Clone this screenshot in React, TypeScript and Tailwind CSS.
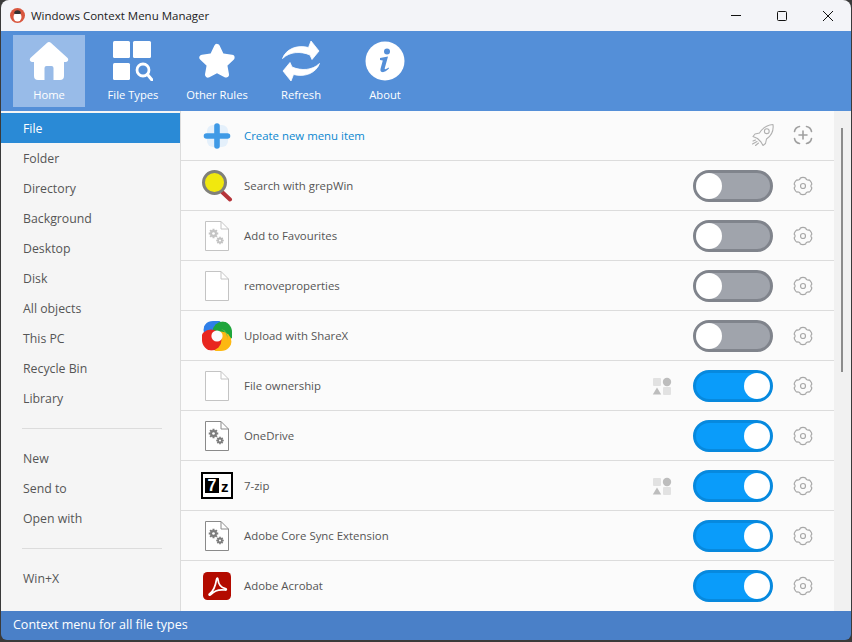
const FONT = "font-['Open_Sans','Noto_Sans',sans-serif]";

const sideTop = ['File', 'Folder', 'Directory', 'Background', 'Desktop', 'Disk', 'All objects', 'This PC', 'Recycle Bin', 'Library'];
const sideMid = ['New', 'Send to', 'Open with'];

function SideItem({ label, active }: { label: string; active?: boolean }) {
  return (
    <div className={`h-[30px] pl-[22px] pt-[2px] flex items-center text-[12.3px] ${active ? 'bg-[#2a8ad6] text-white' : 'text-[#555]'}`}>
      {label}
    </div>
  );
}

function SideRule() {
  return <div className="h-px bg-[#dcdcdc] ml-[21px] mr-[18px] my-[14.5px]" />;
}

function HomeIcon() {
  return (
    <svg width="40" height="40" viewBox="0 0 40 40" fill="white">
      <path d="M20 1 a2.5 2.5 0 0 1 1.8.7 L38.6 17 a2.4 2.4 0 0 1-1.6 4 H35 V35 a4 4 0 0 1-4 4 H24.5 V27 a2 2 0 0 0-2-2 H17.5 a2 2 0 0 0-2 2 V39 H9 a4 4 0 0 1-4-4 V21 H3 a2.4 2.4 0 0 1-1.6-4 L18.2 1.7 A2.5 2.5 0 0 1 20 1Z" />
    </svg>
  );
}

function FileTypesIcon() {
  return (
    <svg width="40" height="40" viewBox="0 0 40 40" fill="white">
      <rect x="0" y="0" width="17" height="17" rx="1.5" />
      <rect x="20" y="0" width="18" height="17" rx="1.5" />
      <rect x="0" y="22" width="17" height="17" rx="1.5" />
      <circle cx="30" cy="29" r="6" fill="none" stroke="white" strokeWidth="2.8" />
      <path d="M34.5 33.5 L39 39" stroke="white" strokeWidth="3" strokeLinecap="round" />
    </svg>
  );
}

function StarIcon() {
  return (
    <svg width="40" height="40" viewBox="0 0 40 40" fill="white" stroke="white" strokeWidth="6" strokeLinejoin="round">
      <path d="M20 6 L24.4 15.2 L34.6 16.6 L27.2 23.6 L29 33.6 L20 28.8 L11 33.6 L12.8 23.6 L5.4 16.6 L15.6 15.2Z" />
    </svg>
  );
}

function RefreshIcon() {
  const arrow = 'M1.5 17.5 C5 8 16 3.5 27.5 6.5 L30 0 L38 10 L31 18.5 L29 14 C19.5 10 9 10.5 1.5 17.5Z';
  return (
    <svg width="40" height="40" viewBox="0 0 40 40" fill="white" stroke="white" strokeWidth="0.8" strokeLinejoin="round">
      <path d={arrow} />
      <path d={arrow} transform="rotate(180 20 20)" />
    </svg>
  );
}

function AboutIcon() {
  return (
    <svg width="40" height="40" viewBox="0 0 40 40">
      <circle cx="20" cy="20" r="19.5" fill="white" />
      <circle cx="22" cy="10.5" r="3" fill="#548fd8" />
      <path d="M15 17 L23 15.5 L19.8 27 C19.4 28.6 20.6 28.8 23.6 26.6 L24 27.6 C21 30.6 18.6 31.6 16.8 31 C15.4 30.5 15.2 29 15.6 27.4 L17.8 19.4 L15 19Z" fill="#548fd8" />
    </svg>
  );
}

function ToolButton({ label, active, children }: { label: string; active?: boolean; children: React.ReactNode }) {
  return (
    <div className={`w-[72px] h-[72px] flex flex-col items-center pt-[6px] ${active ? 'bg-[#98bbe8]' : ''}`}>
      <div className="h-[40px]">{children}</div>
      <div className="mt-[5px] text-[11.2px] leading-[18px] text-white whitespace-nowrap">{label}</div>
    </div>
  );
}

function Gear() {
  return (
    <svg width="20" height="20" viewBox="0 0 20 20" fill="none" stroke="#a8a8a8" strokeWidth="1.2" strokeLinejoin="round">
      <path d="M7.4 2 C8.4 1.2 11.6 1.2 12.6 2 C13 3.4 14.6 4.4 16 3.9 C17.2 4.2 18.9 7.2 18.8 8.3 C17.6 9.2 17.6 10.8 18.8 11.7 C18.9 12.8 17.2 15.8 16 16.1 C14.6 15.6 13 16.6 12.6 18 C11.6 18.8 8.4 18.8 7.4 18 C7 16.6 5.4 15.6 4 16.1 C2.8 15.8 1.1 12.8 1.2 11.7 C2.4 10.8 2.4 9.2 1.2 8.3 C1.1 7.2 2.8 4.2 4 3.9 C5.4 4.4 7 3.4 7.4 2Z" />
      <circle cx="10" cy="10" r="2.5" />
    </svg>
  );
}

function ScanPlus() {
  return (
    <svg width="20" height="20" viewBox="0 0 20 20" fill="none" stroke="#a0a0a0" strokeWidth="1.6" strokeLinecap="round">
      <path d="M1.5 6.5 C2 3.8 3.8 2 6.5 1.5 M13.5 1.5 C16.2 2 18 3.8 18.5 6.5 M18.5 13.5 C18 16.2 16.2 18 13.5 18.5 M6.5 18.5 C3.8 18 2 16.2 1.5 13.5" />
      <path d="M10 6 V14 M6 10 H14" />
    </svg>
  );
}

function RocketIcon() {
  return (
    <svg width="24" height="24" viewBox="0 0 24 24" fill="none" stroke="#b0b0b0" strokeWidth="1.1" strokeLinejoin="round" strokeLinecap="round">
      <path d="M22 1.5 C16 2 11.5 5 8.5 10 L4 11 L2 13.5 L6.5 15.5 L10 19 L12 22.5 L14.5 20.5 L15.5 16 C20.5 12.5 22.8 7.5 22 1.5Z" />
      <circle cx="15.8" cy="8.2" r="2.4" />
      <path d="M2 18 L4.5 17 M1.5 21 L6 18.5 M4.5 22.5 L7.5 20" />
    </svg>
  );
}

function Shapes() {
  return (
    <svg width="20" height="20" viewBox="0 0 20 20">
      <rect x="1" y="2" width="8" height="8" rx="1" fill="#e2e2e2" />
      <circle cx="15" cy="6" r="4.2" fill="#bdbdbd" />
      <path d="M5 11.5 L9.2 18.5 H0.8Z" fill="#bdbdbd" />
      <rect x="11" y="11" width="8" height="8" rx="1" fill="#e2e2e2" />
    </svg>
  );
}

function Toggle({ on }: { on: boolean }) {
  return (
    <div
      className={`w-[80px] h-[32px] rounded-full border-[3px] flex items-center ${
        on ? 'bg-[#0a9cfa] border-[#0789de] justify-end' : 'bg-[#a0a4ac] border-[#80848c] justify-start'
      }`}
    >
      <div className="w-[26px] h-[26px] rounded-full bg-white" />
    </div>
  );
}

function Cog({ x, y, r, color }: { x: number; y: number; r: number; color: string }) {
  const teeth = [0, 45, 90, 135];
  return (
    <g fill={color}>
      <circle cx={x} cy={y} r={r} />
      {teeth.map((a) => (
        <rect key={a} x={x - r * 0.3} y={y - r * 1.4} width={r * 0.6} height={r * 2.8} transform={`rotate(${a} ${x} ${y})`} />
      ))}
      <circle cx={x} cy={y} r={r * 0.4} fill="#fff" />
    </g>
  );
}

function DocIcon({ gears, dark }: { gears?: boolean; dark?: boolean }) {
  const line = dark ? '#8a8a8a' : '#c4c4c4';
  const cog = dark ? '#7d7d7d' : '#c4c4c4';
  return (
    <svg width="24" height="30" viewBox="0 0 24 30" fill="none">
      <path d="M0.5 0.5 H16 L23.5 8 V29.5 H0.5Z" fill="#fff" stroke={line} />
      <path d="M16 0.5 V8 H23.5" stroke={line} />
      {gears && (
        <>
          <Cog x={8.5} y={12.5} r={3.4} color={cog} />
          <Cog x={15} y={19.5} r={2.7} color={cog} />
        </>
      )}
    </svg>
  );
}

function PlusIcon() {
  return (
    <svg width="30" height="30" viewBox="0 0 30 30">
      <rect x="5" y="4" width="21" height="22" rx="6" fill="#e4f0fb" />
      <path d="M15 5 V25 M4.5 15 H25.5" stroke="#3f9ae6" strokeWidth="5.6" strokeLinecap="round" />
    </svg>
  );
}

function GrepIcon() {
  return (
    <svg width="32" height="32" viewBox="0 0 32 32">
      <path d="M20 21 L29 29.5" stroke="#b5343a" strokeWidth="4" strokeLinecap="round" />
      <circle cx="13.5" cy="12.5" r="11" fill="#f1e80e" stroke="#80807a" strokeWidth="3" />
    </svg>
  );
}

function ShareXIcon() {
  return (
    <svg width="32" height="32" viewBox="0 0 32 32">
      <clipPath id="sharex-clip">
        <rect x="1" y="1" width="30" height="30" rx="11" />
      </clipPath>
      <g clipPath="url(#sharex-clip)">
        <circle cx="13" cy="10" r="10.5" fill="#2f7fe8" />
        <circle cx="22" cy="12" r="10.5" fill="#1fa53c" />
        <circle cx="20" cy="22" r="10.5" fill="#fdb812" />
        <circle cx="10" cy="20" r="10.5" fill="#e8261f" />
        <path d="M20 9 A8 8 0 0 1 26 20 A10 10 0 0 0 20 9Z" fill="#7cc142" />
      </g>
      <circle cx="16" cy="16" r="5.6" fill="#fbfbfb" />
    </svg>
  );
}

function SevenZip() {
  return (
    <div className="w-[32px] h-[27px] border-[2px] border-black bg-white flex items-center pl-[2px] font-['Liberation_Sans',sans-serif] font-bold leading-none">
      <span className="w-[14px] h-[15px] bg-black text-white text-[16px] flex items-center justify-center">7</span>
      <span className="ml-[2px] mt-[2px] text-black text-[15px]">z</span>
    </div>
  );
}

function AcrobatIcon() {
  return (
    <svg width="28" height="28" viewBox="0 0 28 28">
      <rect width="28" height="28" rx="4.5" fill="#b30b00" />
      <path d="M6.5 22 C9.5 20 12.4 14 13.4 8 C13.8 5.6 14.8 5.4 15 7.6 C15.4 12 18.4 15.6 22.4 16.6 C24 17 23.4 18.2 21.8 18 C17 17.4 11.4 18.6 8 22.4 C6.6 23.8 5.4 22.8 6.5 22Z" fill="none" stroke="#fff" strokeWidth="1.7" strokeLinejoin="round" />
    </svg>
  );
}

type RowData = { label: string; icon: React.ReactNode; on: boolean; shapes?: boolean };

const rows: RowData[] = [
  { label: 'Search with grepWin', icon: <GrepIcon />, on: false },
  { label: 'Add to Favourites', icon: <DocIcon gears />, on: false },
  { label: 'removeproperties', icon: <DocIcon />, on: false },
  { label: 'Upload with ShareX', icon: <ShareXIcon />, on: false },
  { label: 'File ownership', icon: <DocIcon />, on: true, shapes: true },
  { label: 'OneDrive', icon: <DocIcon gears dark />, on: true },
  { label: '7-zip', icon: <SevenZip />, on: true, shapes: true },
  { label: 'Adobe Core Sync Extension', icon: <DocIcon gears dark />, on: true },
  { label: 'Adobe Acrobat', icon: <AcrobatIcon />, on: true },
];

export default function App() {
  return (
    <div className={`w-[852px] h-[642px] bg-[#3a3a3a] pl-px pr-px pb-[2px] ${FONT}`}>
      <div className="h-full flex flex-col rounded-t-[8px] rounded-b-[6px] overflow-hidden">
        {/* title bar */}
        <div className="h-[31px] shrink-0 bg-[#f3f4f8] flex items-center pl-[9px]">
          <svg width="15" height="15" viewBox="0 0 15 15">
            <circle cx="7.5" cy="7.5" r="7.5" fill="#d9573f" />
            <ellipse cx="7.5" cy="9" rx="4" ry="4.5" fill="#fff" />
            <path d="M4 5.5 C4 1 11 1 11 5.5 L9.5 6 H5.5Z" fill="#333" />
          </svg>
          <span className="ml-[6px] text-[11.5px] text-[#222]">Windows Context Menu Manager</span>
          <div className="ml-auto flex text-[#111]">
            <div className="w-[46px] flex justify-center"><svg width="12" height="12" viewBox="0 0 12 12" fill="none" stroke="currentColor" strokeWidth="1"><path d="M1 5.5 H11" /></svg></div>
            <div className="w-[46px] flex justify-center"><svg width="12" height="12" viewBox="0 0 12 12" fill="none" stroke="currentColor" strokeWidth="1"><rect x="1.5" y="1.5" width="9" height="9" rx="1" /></svg></div>
            <div className="w-[46px] flex justify-center"><svg width="12" height="12" viewBox="0 0 12 12" fill="none" stroke="currentColor" strokeWidth="1"><path d="M1 1 L11 11 M11 1 L1 11" /></svg></div>
          </div>
        </div>

        {/* toolbar */}
        <div className="h-[80px] shrink-0 bg-[#548fd8] flex gap-[12px] pl-[12px] pt-[4px]">
          <ToolButton label="Home" active><HomeIcon /></ToolButton>
          <ToolButton label="File Types"><FileTypesIcon /></ToolButton>
          <ToolButton label="Other Rules"><StarIcon /></ToolButton>
          <ToolButton label="Refresh"><RefreshIcon /></ToolButton>
          <ToolButton label="About"><AboutIcon /></ToolButton>
        </div>

        <div className="flex-1 flex min-h-0">
          {/* side list */}
          <div className="w-[180px] shrink-0 bg-[#f5f5f5] border-r border-[#dcdcdc] pt-[2px]">
            {sideTop.map((s, i) => <SideItem key={s} label={s} active={i === 0} />)}
            <SideRule />
            {sideMid.map((s) => <SideItem key={s} label={s} />)}
            <SideRule />
            <SideItem label="Win+X" />
          </div>

          {/* item list */}
          <div className="flex-1 flex min-w-0 bg-[#fbfbfb]">
            <div className="w-[653px] shrink-0">
              <div className="h-[50px] border-b border-[#dcdcdc] flex items-center pr-[21px]">
                <div className="w-[63px] flex justify-center pl-[9px]"><PlusIcon /></div>
                <span className="text-[11.4px] text-[#0b87d0]">Create new menu item</span>
                <div className="ml-auto mb-[2px]"><RocketIcon /></div>
                <div className="ml-[18px] mb-[1px]"><ScanPlus /></div>
              </div>
              {rows.map((r) => (
                <div key={r.label} className="h-[50px] border-b border-[#dcdcdc] last:border-b-0 flex items-center pr-[21px]">
                  <div className="w-[63px] flex justify-center pl-[9px]">{r.icon}</div>
                  <span className="text-[11.4px] text-[#555]">{r.label}</span>
                  {r.shapes && <div className="ml-auto mr-[21px]"><Shapes /></div>}
                  <div className={r.shapes ? '' : 'ml-auto'}><Toggle on={r.on} /></div>
                  <div className="ml-[20px]"><Gear /></div>
                </div>
              ))}
            </div>
            <div className="flex-1 bg-[#f1f1f1] pt-[17px] pl-[7px]">
              <div className="w-[2px] h-[244px] bg-[#8c8c8c]" />
            </div>
          </div>
        </div>

        {/* status bar */}
        <div className="h-[29px] shrink-0 bg-[#4a80c8] pl-[12px] flex items-center text-[12.5px] text-white">
          Context menu for all file types
        </div>
      </div>
    </div>
  );
}
